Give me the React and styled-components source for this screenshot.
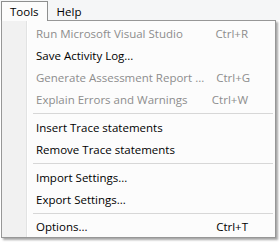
import React from 'react';
import styled, { createGlobalStyle } from 'styled-components';

const GlobalStyle = createGlobalStyle`
  html, body {
    margin: 0;
    padding: 0;
    background: #ffffff;
  }
  body {
    font-family: "Open Sans", "Noto Sans", sans-serif;
    font-size: 11.5px;
    color: #000;
  }
`;

const groups = [
  [
    { label: 'Run Microsoft Visual Studio', shortcut: 'Ctrl+R', disabled: true },
    { label: 'Save Activity Log...' },
    { label: 'Generate Assessment Report ...', shortcut: 'Ctrl+G', disabled: true },
    { label: 'Explain Errors and Warnings', shortcut: 'Ctrl+W', disabled: true },
  ],
  [
    { label: 'Insert Trace statements' },
    { label: 'Remove Trace statements' },
  ],
  [
    { label: 'Import Settings...' },
    { label: 'Export Settings...' },
  ],
  [
    { label: 'Options...', shortcut: 'Ctrl+T' },
  ],
];

const ToolsMenu = () => {
  return (
    <Page>
      <GlobalStyle />
      <MenuBar>
        <Title $open>Tools</Title>
        <Title>Help</Title>
      </MenuBar>
      <Dropdown>
        {groups.map((group, gi) => (
          <React.Fragment key={gi}>
            {gi > 0 && <Separator />}
            {group.map((item) => (
              <Item key={item.label} $disabled={item.disabled}>
                <span>{item.label}</span>
                {item.shortcut && <Shortcut>{item.shortcut}</Shortcut>}
              </Item>
            ))}
          </React.Fragment>
        ))}
      </Dropdown>
    </Page>
  );
};

const Page = styled.div`
  width: 280px;
  height: 242px;
  overflow: hidden;
`;

const MenuBar = styled.div`
  display: flex;
  align-items: flex-start;
  height: 20px;
  padding: 1px 0 0 1px;
  box-sizing: border-box;
  background: #f5f6f7;
`;

const Title = styled.div`
  position: relative;
  z-index: 1;
  height: 20px;
  box-sizing: border-box;
  display: flex;
  align-items: center;
  padding: 0 8px 1px 8px;
  border: 1px solid ${(p) => (p.$open ? '#8e8f8f' : 'transparent')};
  border-bottom: none;
  background: ${(p) => (p.$open ? '#fcfcfc' : 'transparent')};
`;

const Dropdown = styled.div`
  width: 275px;
  margin-left: 1px;
  box-sizing: border-box;
  border: 1px solid #979797;
  padding: 1px 0 0;
  background: linear-gradient(
    to right,
    #f1f1f1 0 24px,
    #e2e3e3 24px 25px,
    #ffffff 25px 26px,
    #fcfcfc 26px
  );
  box-shadow: 2px 2px 2px rgba(0, 0, 0, 0.35);
`;

const Item = styled.div`
  display: flex;
  align-items: center;
  justify-content: space-between;
  height: 22px;
  padding: 0 27px 0 34px;
  color: ${(p) => (p.$disabled ? '#8d8d8d' : '#000')};
  white-space: nowrap;
  &:last-child {
    height: 21px;
  }
`;

const Shortcut = styled.span`
  margin-left: 12px;
`;

const Separator = styled.div`
  height: 1px;
  margin: 3px 2px 2px 31px;
  background: #d7d7d7;
`;

export default ToolsMenu;
